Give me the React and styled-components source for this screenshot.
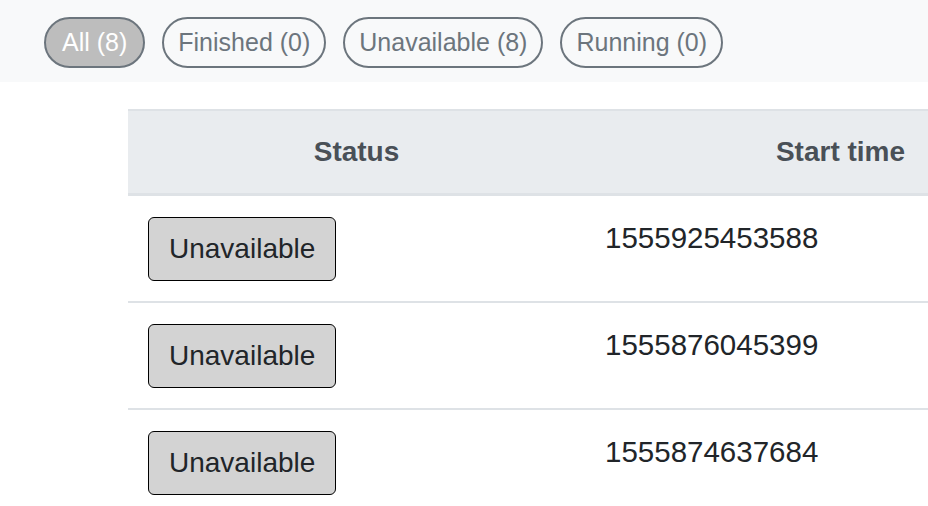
import React from "react";
import styled, { createGlobalStyle } from "styled-components";

const Global = createGlobalStyle`
  html, body { margin: 0; padding: 0; background: #fff; overflow: hidden; }
  body { font-family: "Liberation Sans", Arial, sans-serif; color: #212529; }
`;

const Page = styled.div`
  width: 928px;
  height: 506px;
  overflow: hidden;
`;

const FilterBar = styled.div`
  display: flex;
  gap: 17px;
  padding: 17px 0 14px 44px;
  background: #f8f9fa;
`;

const Pill = styled.button`
  font-family: inherit;
  font-size: 25px;
  line-height: 37px;
  padding: 5px ${(p) => (p.$active ? 16 : 14)}px;
  border: 2px solid #6c757d;
  border-radius: 30px;
  background: ${(p) => (p.$active ? "#bdbdbd" : "transparent")};
  color: ${(p) => (p.$active ? "#fff" : "#6c757d")};
  cursor: pointer;
`;

const TableWrap = styled.div`
  padding: 27px 0 0 128px;
`;

const Table = styled.table`
  border-collapse: collapse;
  table-layout: fixed;
  width: 968px;
  min-width: 968px;
  font-size: 28px;
`;

const Th = styled.th`
  box-sizing: border-box;
  width: ${(p) => p.$w}px;
  background: #e9ecef;
  color: #495057;
  font-weight: bold;
  text-align: center;
  line-height: 42px;
  padding: 20px 21px;
  border-top: 2px solid #dee2e6;
  border-bottom: 3px solid #dee2e6;
  white-space: nowrap;
`;

const Tr = styled.tr`
  & + & td { border-top: 2px solid #dee2e6; }
`;

const Td = styled.td`
  padding: 21px 20px 20px;
  line-height: 42px;
  vertical-align: top;
  text-align: left;
`;

const Timestamp = styled.span`
  font-size: 29.5px;
  line-height: 40px;
  display: inline-block;
  padding-top: 1px;
`;

const StatusButton = styled.button`
  font-family: inherit;
  font-size: 28px;
  line-height: 42px;
  padding: 10px 20px;
  color: #212529;
  background: #d3d3d3;
  border: 1px solid #000;
  border-radius: 6px;
  display: inline-block;
  vertical-align: top;
`;

const filters = [
  { label: "All (8)", active: true },
  { label: "Finished (0)" },
  { label: "Unavailable (8)" },
  { label: "Running (0)" },
];

const rows = ["1555925453588", "1555876045399", "1555874637684"];

export default function App() {
  return (
    <Page>
      <Global />
      <FilterBar>
        {filters.map((f) => (
          <Pill key={f.label} $active={f.active}>{f.label}</Pill>
        ))}
      </FilterBar>
      <TableWrap>
        <Table>
          <thead>
            <tr>
              <Th $w={457}>Status</Th>
              <Th $w={511}>Start time</Th>
            </tr>
          </thead>
          <tbody>
            {rows.map((r) => (
              <Tr key={r}>
                <Td><StatusButton>Unavailable</StatusButton></Td>
                <Td><Timestamp>{r}</Timestamp></Td>
              </Tr>
            ))}
          </tbody>
        </Table>
      </TableWrap>
    </Page>
  );
}
